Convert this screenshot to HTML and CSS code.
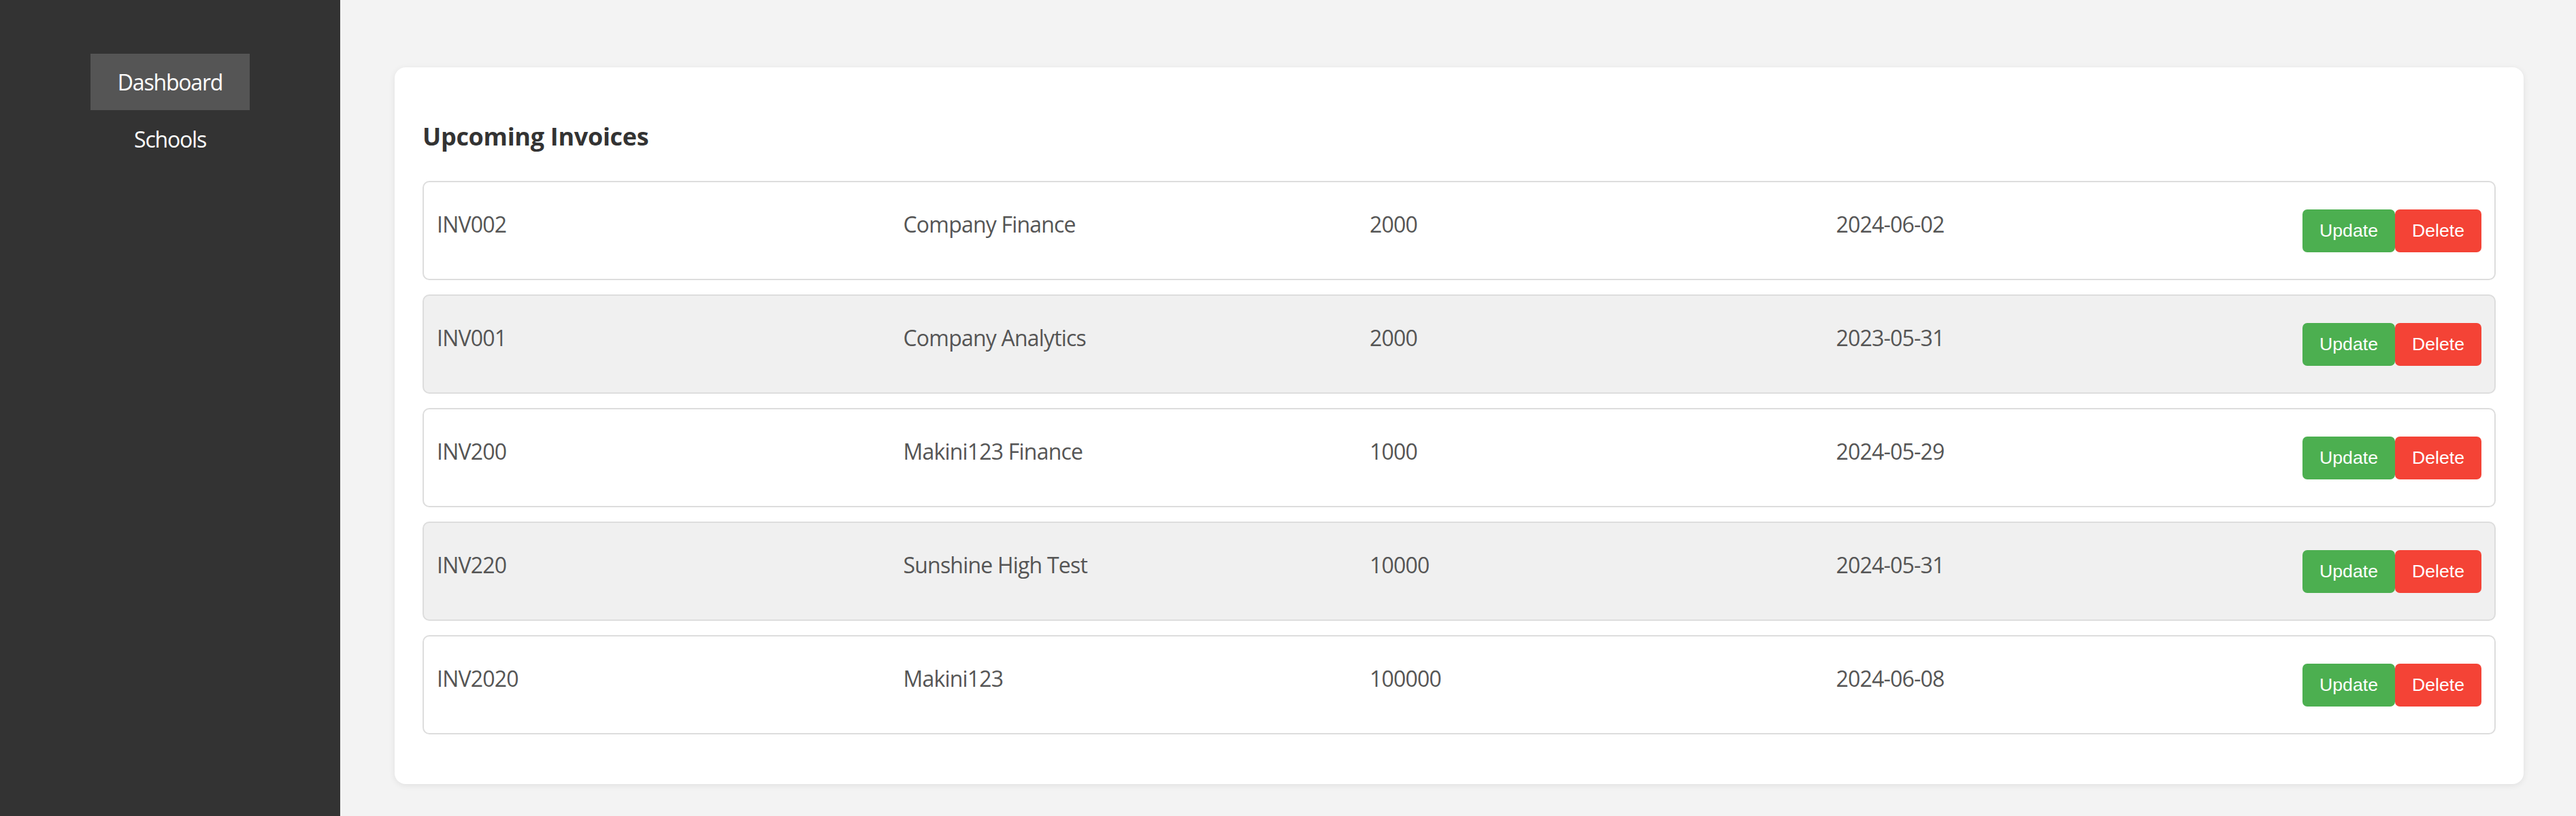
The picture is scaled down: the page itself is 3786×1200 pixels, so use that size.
FILE: index.html
```html
<!DOCTYPE html>
<html lang="en">
<head>
<meta charset="utf-8">
<title>Dashboard</title>
<link rel="stylesheet" href="styles.css">
</head>
<body>
<div class="layout">
  <nav class="sidebar">
    <a class="nav-item active" href="#">Dashboard</a>
    <a class="nav-item" href="#">Schools</a>
  </nav>
  <main class="main">
    <section class="card">
      <h3 class="card-title">Upcoming Invoices</h3>
      <div class="list">
        <div class="row">
          <span class="cell">INV002</span>
          <span class="cell">Company Finance</span>
          <span class="cell">2000</span>
          <span class="cell">2024-06-02</span>
          <div class="actions"><button class="btn btn-update">Update</button><button class="btn btn-delete">Delete</button></div>
        </div>
        <div class="row alt">
          <span class="cell">INV001</span>
          <span class="cell">Company Analytics</span>
          <span class="cell">2000</span>
          <span class="cell">2023-05-31</span>
          <div class="actions"><button class="btn btn-update">Update</button><button class="btn btn-delete">Delete</button></div>
        </div>
        <div class="row">
          <span class="cell">INV200</span>
          <span class="cell">Makini123 Finance</span>
          <span class="cell">1000</span>
          <span class="cell">2024-05-29</span>
          <div class="actions"><button class="btn btn-update">Update</button><button class="btn btn-delete">Delete</button></div>
        </div>
        <div class="row alt">
          <span class="cell">INV220</span>
          <span class="cell">Sunshine High Test</span>
          <span class="cell">10000</span>
          <span class="cell">2024-05-31</span>
          <div class="actions"><button class="btn btn-update">Update</button><button class="btn btn-delete">Delete</button></div>
        </div>
        <div class="row">
          <span class="cell">INV2020</span>
          <span class="cell">Makini123</span>
          <span class="cell">100000</span>
          <span class="cell">2024-06-08</span>
          <div class="actions"><button class="btn btn-update">Update</button><button class="btn btn-delete">Delete</button></div>
        </div>
      </div>
    </section>
  </main>
</div>
</body>
</html>
```
FILE: styles.css
```css
* { box-sizing: border-box; }
html, body { margin: 0; padding: 0; height: 100%; }
body {
  font-family: "Open Sans", "Noto Sans", sans-serif;
  background: #f3f3f3;
  color: #555;
}
.layout {
  display: flex;
  min-height: 1200px;
}
.sidebar {
  width: 500px;
  flex: none;
  background: #333333;
  display: flex;
  flex-direction: column;
  align-items: center;
  padding-top: 79px;
  gap: 1px;
}
.nav-item {
  display: block;
  color: #ffffff;
  text-decoration: none;
  font-size: 32px;
  line-height: 43px;
  letter-spacing: -1.2px;
  padding: 20px 40px;
}
.nav-item.active { background: #555555; }
.main {
  flex: 1;
  padding: 99px 77px 40px 80px;
}
.card {
  background: #ffffff;
  border-radius: 16px;
  box-shadow: 0 2px 10px rgba(0, 0, 0, 0.08);
  padding: 40px 41px 73px 41px;
}
.card-title {
  margin: 37px 0 40px;
  font-size: 36px;
  line-height: 50px;
  font-weight: 700;
  letter-spacing: -0.3px;
  color: #333333;
}
.list {
  display: flex;
  flex-direction: column;
  gap: 21px;
}
.row {
  display: flex;
  align-items: center;
  height: 146px;
  border: 2px solid #dddddd;
  border-radius: 10px;
  padding: 0 19px;
  background: #ffffff;
}
.row.alt { background: #f0f0f0; }
.cell {
  flex: 1;
  font-size: 32px;
  line-height: 43px;
  letter-spacing: -0.8px;
  margin-bottom: 19px;
  color: #555555;
}
.actions {
  display: flex;
  flex: none;
}
.btn {
  font-family: "Liberation Sans", Arial, sans-serif;
  font-size: 26.67px;
  color: #ffffff;
  border: none;
  height: 63px;
  padding: 0 25px;
  border-radius: 7px;
  cursor: pointer;
}
.btn-update { background: #4caf50; }
.btn-delete { background: #f44336; }
```
